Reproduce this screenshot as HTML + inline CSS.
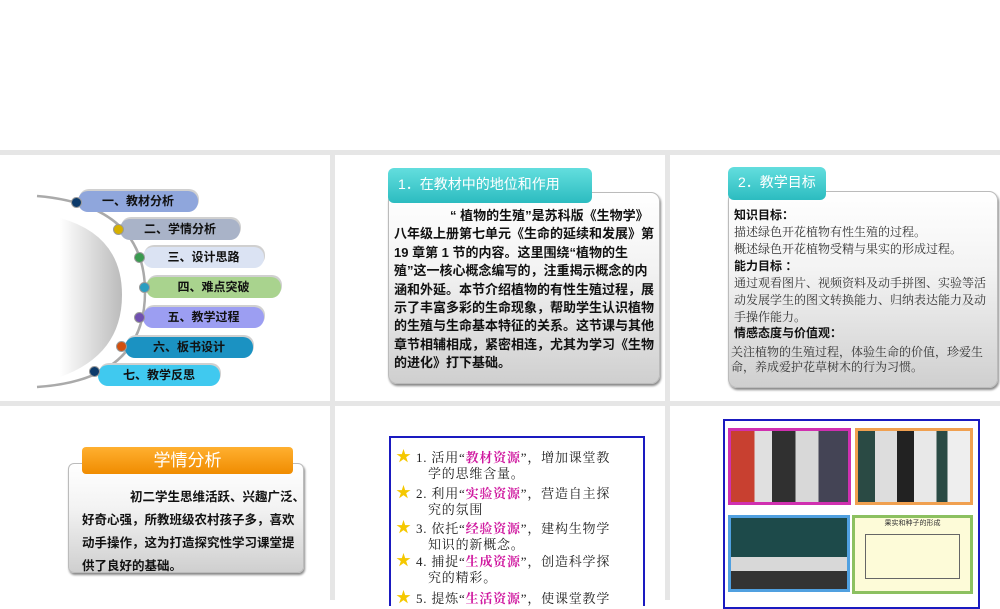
<!DOCTYPE html>
<html><head><meta charset="utf-8"><style>
*{margin:0;padding:0;box-sizing:border-box}
body{width:1000px;height:600px;background:#fff;position:relative;overflow:hidden;font-family:"Liberation Sans","Noto Sans CJK SC",sans-serif}
.a{position:absolute}
.g{background:#e6e6e6}
.pill{position:absolute;height:21px;border-radius:10px;font-size:12px;font-weight:bold;color:#111;line-height:21px;text-align:center;box-shadow:1px -2px 0 #d0d0d0}
.dot{position:absolute;width:11px;height:11px;border-radius:50%;border:1px solid #999}
.body{position:absolute;border-radius:9px;background:linear-gradient(#fff,#f3f3f3 40%,#cfcfcf);box-shadow:1px 2px 2px #888;border:1px solid #bbb}
.hd{position:absolute;border-radius:6px;background:linear-gradient(#63dede,#2cbcc0);color:#fff;font-size:14px;padding-left:10px}
.t{font-size:13px;font-weight:bold;color:#111;line-height:18.4px}
.m{color:#d01aa0;font-weight:bold}
.l{position:absolute;left:400px;font-size:13px;color:#222;line-height:16px;width:250px;white-space:nowrap;letter-spacing:0.8px;font-family:"Liberation Serif","Noto Serif CJK SC",serif}
.star{color:#f5c800;font-size:15px;position:absolute;left:-4px;top:-1px}
</style></head><body>
<div class="a g" style="left:0;top:150px;width:1000px;height:5px"></div>
<div class="a g" style="left:0;top:401px;width:1000px;height:5px"></div>
<div class="a g" style="left:330px;top:150px;width:5px;height:450px"></div>
<div class="a g" style="left:665px;top:150px;width:5px;height:450px"></div>

<svg class="a" style="left:0;top:155px" width="330" height="245">
<defs><linearGradient id="sg" x1="0" x2="1"><stop offset="0" stop-color="#fff"/><stop offset="1" stop-color="#bbb"/></linearGradient></defs>
<path d="M60 63 Q122 80 122 140 Q122 200 60 222 Z" fill="url(#sg)"/>
<path d="M37 41 Q145 50 145 137 Q145 225 37 232" fill="none" stroke="#aaa" stroke-width="2.5"/>
</svg>
<div class="pill" style="left:78px;top:191px;width:120px;background:#8fa6dc">一、教材分析</div>
<div class="pill" style="left:120px;top:219px;width:120px;background:#a9b3c8">二、学情分析</div>
<div class="pill" style="left:143px;top:247px;width:121px;background:#dbe3f3">三、设计思路</div>
<div class="pill" style="left:146px;top:277px;width:135px;background:#a9d38e">四、难点突破</div>
<div class="pill" style="left:143px;top:307px;width:121px;background:#9c9ef2">五、教学过程</div>
<div class="pill" style="left:125px;top:337px;width:128px;background:#1b92c2">六、板书设计</div>
<div class="pill" style="left:98px;top:365px;width:122px;background:#40c9ef">七、教学反思</div>
<div class="dot" style="left:71px;top:197px;background:#0c3a6a"></div>
<div class="dot" style="left:113px;top:224px;background:#d6b000"></div>
<div class="dot" style="left:134px;top:252px;background:#3a9a50"></div>
<div class="dot" style="left:139px;top:282px;background:#2a9ec0"></div>
<div class="dot" style="left:134px;top:312px;background:#7050b0"></div>
<div class="dot" style="left:116px;top:341px;background:#d05010"></div>
<div class="dot" style="left:89px;top:366px;background:#0c3a6a"></div>

<div class="body" style="left:388px;top:192px;width:272px;height:192px"></div>
<div class="hd" style="left:388px;top:168px;width:204px;height:35px;line-height:33px">1．在教材中的地位和作用</div>
<div class="a t" style="left:394px;top:207px;width:264px"><span style="padding-left:56px"></span>“ 植物的生殖”是苏科版《生物学》八年级上册第七单元《生命的延续和发展》第19 章第 1 节的内容。这里围绕“植物的生<br>殖”这一核心概念编写的，注重揭示概念的内涵和外延。本节介绍植物的有性生殖过程，展示了丰富多彩的生命现象，帮助学生认识植物的生殖与生命基本特征的关系。这节课与其他章节相辅相成，紧密相连，尤其为学习《生物的进化》打下基础。</div>

<div class="body" style="left:728px;top:191px;width:270px;height:197px"></div>
<div class="hd" style="left:728px;top:167px;width:98px;height:33px;line-height:31px">2．教学目标</div>
<div class="a" style="left:734px;top:207px;width:256px;font-size:12px;color:#333;line-height:17px;font-family:'Liberation Serif','Noto Serif CJK SC',serif">
<div style="font-weight:bold;font-size:12px;color:#111;font-family:'Liberation Sans','Noto Sans CJK SC',sans-serif">知识目标：</div>
<div>描述绿色开花植物有性生殖的过程。</div>
<div>概述绿色开花植物受精与果实的形成过程。</div>
<div style="font-weight:bold;font-size:12px;color:#111;font-family:'Liberation Sans','Noto Sans CJK SC',sans-serif">能力目标 ：</div>
<div>通过观看图片、视频资料及动手拼图、实验等活动发展学生的图文转换能力、归纳表达能力及动手操作能力。</div>
<div style="font-weight:bold;font-size:12px;color:#111;line-height:15px;font-family:'Liberation Sans','Noto Sans CJK SC',sans-serif">情感态度与价值观：</div>
<div style="margin-top:4px;margin-left:-3px;line-height:15px;width:258px">关注植物的生殖过程，体验生命的价值，珍爱生命，养成爱护花草树木的行为习惯。</div>
</div>

<div class="body" style="left:68px;top:463px;width:236px;height:110px;border-radius:6px"></div>
<div class="a" style="left:82px;top:447px;width:211px;height:27px;border-radius:4px;background:linear-gradient(#ffb030,#f08c00);color:#fff;font-size:17px;text-align:center;line-height:27px">学情分析</div>
<div class="a t" style="left:82px;top:486px;width:240px;line-height:23px;white-space:nowrap;font-size:12.5px"><span style="padding-left:48px"></span>初二学生思维活跃、兴趣广泛、<br>好奇心强，所教班级农村孩子多，喜欢<br>动手操作，这为打造探究性学习课堂提<br>供了良好的基础。</div>

<div class="a" style="left:389px;top:436px;width:256px;height:170px;border:2px solid #1a1ac0;border-bottom:none"></div>
<div class="l" style="top:450px"><span class="star">★</span><span style="padding-left:16px">1. 活用“<span class="m">教材资源</span>”，增加课堂教</span><br><span style="padding-left:28px">学的思维含量。</span></div>
<div class="l" style="top:486px"><span class="star">★</span><span style="padding-left:16px">2. 利用“<span class="m">实验资源</span>”，营造自主探</span><br><span style="padding-left:28px">究的氛围</span></div>
<div class="l" style="top:521px"><span class="star">★</span><span style="padding-left:16px">3. 依托“<span class="m">经验资源</span>”，建构生物学</span><br><span style="padding-left:28px">知识的新概念。</span></div>
<div class="l" style="top:554px"><span class="star">★</span><span style="padding-left:16px">4. 捕捉“<span class="m">生成资源</span>”，创造科学探</span><br><span style="padding-left:28px">究的精彩。</span></div>
<div class="l" style="top:591px"><span class="star">★</span><span style="padding-left:16px">5. 提炼“<span class="m">生活资源</span>”，使课堂教学</span></div>

<div class="a" style="left:723px;top:419px;width:257px;height:190px;border:2px solid #1a1ac0;background:#fff"></div>
<div class="a" style="left:728px;top:428px;width:123px;height:77px;border:3px solid #d030b0;background:linear-gradient(90deg,#c84030 0 20%,#e0e0e0 20% 35%,#303030 35% 55%,#d8d8d8 55% 75%,#445 75%)"></div>
<div class="a" style="left:855px;top:428px;width:118px;height:77px;border:3px solid #f0a050;background:linear-gradient(90deg,#2a4a44 0 15%,#ddd 15% 35%,#222 35% 50%,#e8e8e8 50% 70%,#2a4a44 70% 80%,#eee 80%)"></div>
<div class="a" style="left:728px;top:515px;width:122px;height:77px;border:3px solid #50a0e0;background:linear-gradient(#1d4a4a 0 55%,#d8d8d8 55% 75%,#333 75%)"></div>
<div class="a" style="left:852px;top:515px;width:121px;height:79px;border:3px solid #8cc060;background:#fdfbd8;font-size:7px;text-align:center;color:#333">果实和种子的形成
<div style="margin:6px 10px;height:45px;border:1px solid #666"></div></div>
</body></html>
